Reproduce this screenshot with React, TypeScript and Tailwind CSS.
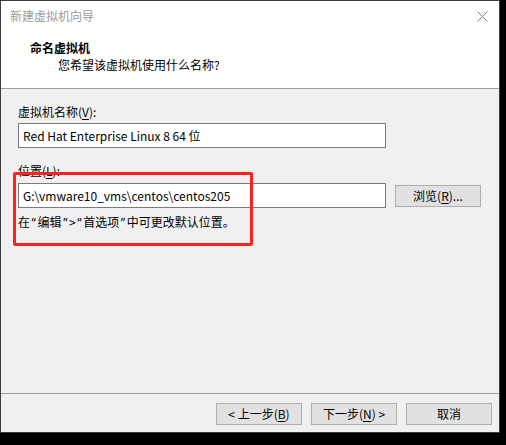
import React from "react";

const font = { fontFamily: '"Noto Sans CJK SC", "Noto Sans", sans-serif' };

function Btn({ children }: { children: React.ReactNode }) {
    return (
        <button className="w-[86px] h-[22px] bg-[#e1e1e1] border border-[#adadad] text-[12px] leading-[16px] text-black flex items-center justify-center">
            {children}
        </button>
    );
}

function Key({ k }: { k: string }) {
    return <span className="underline underline-offset-2">{k}</span>;
}

// half-width quote marks, like the Windows UI font
function Q({ c }: { c: string }) {
    return <span className="inline-block w-[7.5px] text-center font-['Noto_Sans',sans-serif]">{c}</span>;
}

export default function App() {
    return (
        <div className="relative w-[506px] h-[445px] bg-black overflow-hidden" style={font}>
            <div className="w-[500px] h-[433px] border border-[#3c3c3c] bg-[#f0f0f0] flex flex-col">
                {/* header */}
                <div className="h-[88px] bg-white border-b border-[#a0a0a0] shrink-0">
                    <div className="h-[30px] flex items-center justify-between pl-[9px] pr-[11px]">
                        <span className="text-[12px] leading-[16px] text-[#9a9a9a]">新建虚拟机向导</span>
                        <svg width="11" height="11" viewBox="0 0 11 11">
                            <path d="M0.5 0.5 L10.5 10.5 M10.5 0.5 L0.5 10.5" stroke="#808080" strokeWidth="1" />
                        </svg>
                    </div>
                    <div className="mt-[9px] pl-[29px] text-[12px] leading-[16px] font-bold text-black">命名虚拟机</div>
                    <div className="mt-[1px] pl-[57px] text-[12px] leading-[16px] text-black">您希望该虚拟机使用什么名称?</div>
                </div>

                {/* body */}
                <div className="flex-1 px-[17px] pt-[15px] text-[12px] leading-[16px] text-black">
                    <div>
                        虚拟机名称(<Key k="V" />):
                    </div>
                    <div className="mt-[3px] w-[368px] h-[25px] bg-white border border-[#7a7a7a] flex items-center px-[4px]">
                        Red Hat Enterprise Linux 8 64 位
                    </div>
                    <div className="mt-[15px]">
                        位置(<Key k="L" />):
                    </div>
                    <div className="mt-[4px] flex items-center">
                        <div className="w-[368px] h-[25px] bg-white border border-[#7a7a7a] flex items-center px-[4px]">
                            G:\vmware10_vms\centos\centos205
                        </div>
                        <div className="ml-[9px]">
                            <Btn>
                                浏览(<Key k="R" />)...
                            </Btn>
                        </div>
                    </div>
                    <div className="mt-[6px]">
                        在<Q c="“" />编辑<Q c="”" />&gt;<Q c="“" />首选项<Q c="”" />中可更改默认位置。
                    </div>
                </div>

                {/* footer */}
                <div className="h-[39px] border-t border-[#a0a0a0] shrink-0 flex justify-end gap-[9px] pt-[9px] pr-[7px]">
                    <Btn>
                        &lt; 上一步(<Key k="B" />)
                    </Btn>
                    <Btn>
                        下一步(<Key k="N" />) &gt;
                    </Btn>
                    <Btn>取消</Btn>
                </div>
            </div>

            {/* red annotation box */}
            <div className="absolute left-[13px] top-[172px] w-[240px] h-[74px] border-[3px] border-[#ff2020] rounded-[2px]" />
        </div>
    );
}
